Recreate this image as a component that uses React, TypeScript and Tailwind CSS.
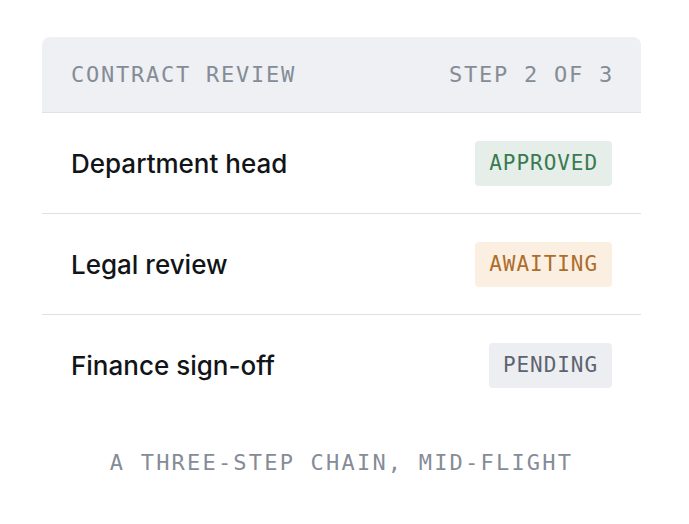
import React from 'react';

type Status = 'approved' | 'awaiting' | 'pending';

interface Step {
  name: string;
  status: Status;
}

const steps: Step[] = [
  { name: 'Department head', status: 'approved' },
  { name: 'Legal review', status: 'awaiting' },
  { name: 'Finance sign-off', status: 'pending' },
];

const badgeStyles: Record<Status, string> = {
  approved: 'bg-[#e5eee8] text-[#3a7a52]',
  awaiting: 'bg-[#fbefe1] text-[#ad6d2b]',
  pending: 'bg-[#eceef2] text-[#5d6470]',
};

const mono = "font-['DejaVu_Sans_Mono',monospace]";

const StatusBadge: React.FC<{ status: Status }> = ({ status }) => (
  <span
    className={`${mono} ${badgeStyles[status]} rounded-[4px] px-[14px] py-[10px] text-[21px] leading-[25px] tracking-[0.045em] uppercase`}
  >
    {status}
  </span>
);

const App: React.FC = () => {
  return (
    <div className="min-h-[524px] bg-white pt-[37px] pl-[42px] font-['Inter',sans-serif]">
      <div className="w-[599px]">
        <div className="flex h-[76px] items-center justify-between rounded-t-lg border-b border-[#dfe2e6] bg-[#eef0f3] px-[29px]">
          <span className={`${mono} text-[22px] tracking-[0.08em] text-[#858c97]`}>CONTRACT REVIEW</span>
          <span className={`${mono} text-[22px] tracking-[0.08em] text-[#858c97] -mr-[2px]`}>STEP 2 OF 3</span>
        </div>

        {steps.map((step, i) => (
          <div
            key={step.name}
            className={`flex h-[101px] items-center justify-between px-[29px] ${
              i < steps.length - 1 ? 'border-b border-[#dce1e3]' : ''
            }`}
          >
            <span className="text-[26px] font-medium text-[#111418]">{step.name}</span>
            <StatusBadge status={step.status} />
          </div>
        ))}

        <p className={`${mono} mt-[30px] text-center text-[22px] tracking-[0.1em] text-[#858c97]`}>
          A THREE-STEP CHAIN, MID-FLIGHT
        </p>
      </div>
    </div>
  );
};

export default App;
